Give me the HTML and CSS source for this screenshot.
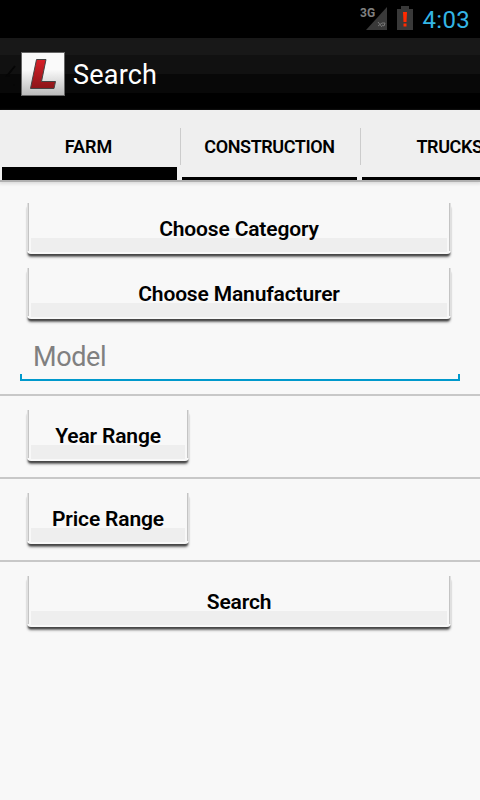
FILE: index.html
```html
<!DOCTYPE html>
<html lang="en">
<head>
    <meta charset="UTF-8">
    <meta name="viewport" content="width=device-width, initial-scale=1.0">
    <title>Search</title>
    <link rel="stylesheet" href="styles.css">
</head>
<body>
    <div class="status-bar">
        <svg class="signal" width="28" height="26" viewBox="0 0 28 26">
            <path d="M27 1V24H6z" fill="#393939"/>
            <path d="M18 16l4 5M22 17l-4 3M22 17h3l-1 3-2-1" stroke="#777" fill="none"/>
            <text class="network" x="0" y="11">3G</text>
        </svg>
        <svg class="battery" width="16" height="24" viewBox="0 0 16 24">
            <path d="M0 3H4V0H12V3H16V24H0z" fill="#393939"/>
            <path d="M6 6H10L9.500 16H6.500zM6.500 17.500H9.500V20.500H6.500z" fill="#ff2a00"/>
        </svg>
        <span class="clock">4:03</span>
    </div>
    <div class="action-bar">
        <svg class="back" width="12" height="22" viewBox="0 0 12 22">
            <path d="M11 2L3 12H6M9 21H11" stroke="#060606" stroke-width="2" fill="none"/>
        </svg>
        <svg class="logo" width="44" height="44" viewBox="0 0 44 44">
            <defs>
                <linearGradient id="tile" x1="0" y1="0" x2="0" y2="1">
                    <stop offset="0.4" stop-color="#fafafa"/>
                    <stop offset="1" stop-color="#bababa"/>
                </linearGradient>
                <linearGradient id="red" x1="0" y1="0" x2="0" y2="1">
                    <stop offset="0" stop-color="#d82028"/>
                    <stop offset="1" stop-color="#8c1519"/>
                </linearGradient>
            </defs>
            <rect x="0.500" y="0.500" width="43" height="43" fill="url(#tile)" stroke="#666"/>
            <path d="M15.500 7.500H25L20.500 29.500H34.500L33 36.500H9.500z" fill="url(#red)" stroke="#444"/>
        </svg>
        <h1>Search</h1>
    </div>
    <div class="tabs">
        <div class="tab selected"><span>FARM</span></div>
        <div class="tab"><span>CONSTRUCTION</span></div>
        <div class="tab"><span>TRUCKS</span></div>
    </div>
    <div class="form">
        <div class="section">
            <button>Choose Category</button>
            <button>Choose Manufacturer</button>
            <input class="model" type="text" placeholder="Model">
        </div>
        <div class="section">
            <button class="small">Year Range</button>
        </div>
        <div class="section">
            <button class="small">Price Range</button>
        </div>
        <div class="section">
            <button>Search</button>
        </div>
    </div>
</body>
</html>
```

FILE: styles.css
```css
* {
    box-sizing: border-box;
}

body {
    margin: 0;
    width: 480px;
    height: 800px;
    overflow: hidden;
    background-color: #f8f8f8;
    font-family: Roboto, sans-serif;
    color: #000;
}

.status-bar {
    display: flex;
    justify-content: flex-end;
    height: 38px;
    padding-right: 10px;
    background-color: #000;
}

.signal {
    margin: 6px 9px 0 0;
}

.network {
    font-size: 12px;
    font-weight: 700;
    fill: #808080;
}

.battery {
    margin: 6px 10px 0 0;
}

.clock {
    color: #33b5e5;
    font-size: 24px;
    letter-spacing: 0.3px;
    line-height: 40px;
}

.action-bar {
    display: flex;
    height: 72px;
    background: linear-gradient(#181818 17px, #111 17px, #111 36px, #080808 36px, #080808 55px, #000 55px);
}

.back {
    margin: 26px 5px 0 4px;
}

.logo {
    margin: 14px 8px 0 0;
}

h1 {
    margin: 0;
    color: #fff;
    font-size: 27px;
    font-weight: 400;
    letter-spacing: 0.2px;
    line-height: 74px;
}

.tabs {
    display: flex;
    height: 70px;
    overflow-x: clip;
    background-color: #efefef;
    box-shadow: 0 2px 0 #b0b0b0, 0 3px 3px 1px #ddd;
}

.tab {
    flex: 0 0 180px;
    padding: 0 3px 0 1px;
    font-size: 18px;
    font-weight: 600;
    letter-spacing: -0.4px;
    text-align: center;
}

.tab span {
    display: block;
    height: 70px;
    border-bottom: 3px solid #000;
    line-height: 74px;
}

.tab + .tab {
    border-left: 1px solid #ccc;
    border-image: linear-gradient(transparent 18px, #ccc 18px, #ccc 54px, transparent 54px) 1;
}

.tab.selected {
    padding-left: 2px;
    letter-spacing: 0;
}

.tab.selected span {
    border-bottom-width: 13px;
    padding-right: 2px;
}

.form {
    padding-top: 15px;
}

.section {
    padding: 8px 20px 13px;
}

.section + .section {
    height: 83px;
    border-top: 2px solid #c8c8c8;
    padding-top: 14px;
}

.section:first-child {
    height: 199px;
}

button {
    display: block;
    width: 424px;
    height: 51px;
    margin: 0 7px 14px;
    padding: 0;
    border: none;
    border-radius: 0 0 4px 4px;
    background:
        linear-gradient(#eee, #eee) 4px 35px / calc(100% - 8px) 14px no-repeat,
        linear-gradient(#e0e0e0, #e0e0e0) left top / 1px 48px no-repeat,
        linear-gradient(#c4c4c4, #c4c4c4) 1px 0 / 1px 48px no-repeat,
        linear-gradient(#e0e0e0, #e0e0e0) right top / 1px 48px no-repeat,
        linear-gradient(#c4c4c4, #c4c4c4) calc(100% - 1px) 0 / 1px 48px no-repeat,
        #f8f8f8;
    box-shadow: 0 3px 2px -1px #444, 0 4px 3px -1px #888;
    color: #000;
    font-family: Roboto, sans-serif;
    font-size: 21px;
    font-weight: 600;
    letter-spacing: -0.15px;
}

.small {
    width: 162px;
}

.model {
    display: block;
    width: 440px;
    height: 48px;
    padding: 0 13px 1px;
    border: none;
    outline: none;
    background:
        linear-gradient(#0099cc, #0099cc) left bottom / 2px 7px no-repeat,
        linear-gradient(#0099cc, #0099cc) right bottom / 2px 7px no-repeat,
        linear-gradient(#0099cc, #0099cc) left bottom / 100% 2px no-repeat;
    font-family: Roboto, sans-serif;
    font-size: 27px;
    letter-spacing: -0.4px;
}

.model::placeholder {
    color: #808080;
}
```
